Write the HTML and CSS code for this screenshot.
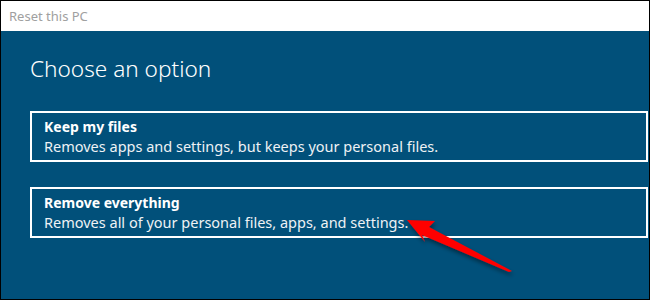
FILE: index.html
```html
<!DOCTYPE html>
<html lang="en">
<head>
  <meta charset="UTF-8">
  <title>Reset this PC</title>
  <link rel="stylesheet" href="styles.css">
</head>
<body>
  <div class="window">
    <div class="titlebar">Reset this PC</div>
    <div class="content">
      <h1 class="heading">Choose an option</h1>
      <div class="option">
        <div class="option-title">Keep my files</div>
        <div class="option-desc">Removes apps and settings, but keeps your personal files.</div>
      </div>
      <div class="option">
        <div class="option-title">Remove everything</div>
        <div class="option-desc">Removes all of your personal files, apps, and settings.</div>
      </div>
    </div>
    <svg class="arrow" width="120" height="70" viewBox="0 0 120 70">
      <defs>
        <filter id="shadow" x="-20%" y="-20%" width="140%" height="160%">
          <feDropShadow dx="1" dy="3" stdDeviation="2" flood-color="#000" flood-opacity="0.45"/>
        </filter>
      </defs>
      <polygon filter="url(#shadow)" fill="#ff0000" points="6,9 34,10 28,16 111,60 108,61 21,24 24,31"/>
    </svg>
  </div>
</body>
</html>
```

FILE: styles.css
```css
* {
  box-sizing: border-box;
}
body {
  margin: 0;
  font-family: "Noto Sans", "Open Sans", sans-serif;
}
.window {
  position: relative;
  width: 650px;
  height: 300px;
  border: 1px solid #000;
  background-color: #01507a;
}
.titlebar {
  height: 30px;
  background-color: #fff;
  color: #a0a0a0;
  font-size: 13px;
  padding: 6px 0 0 8px;
}
.content {
  padding: 18px 1px 0 29px;
  color: #fff;
}
.heading {
  margin: 0 0 22px 0;
  font-size: 22.6px;
  font-weight: 300;
  line-height: 40px;
}
.option {
  height: 51px;
  border: 2px solid #fff;
  padding: 4px 0 0 12px;
  margin-bottom: 25px;
}
.option-title {
  font-size: 14px;
  font-weight: 700;
  line-height: 19px;
}
.option-desc {
  font-size: 14.5px;
  line-height: 20px;
  color: #eef2f5;
}
.arrow {
  position: absolute;
  left: 400px;
  top: 210px;
}
```
